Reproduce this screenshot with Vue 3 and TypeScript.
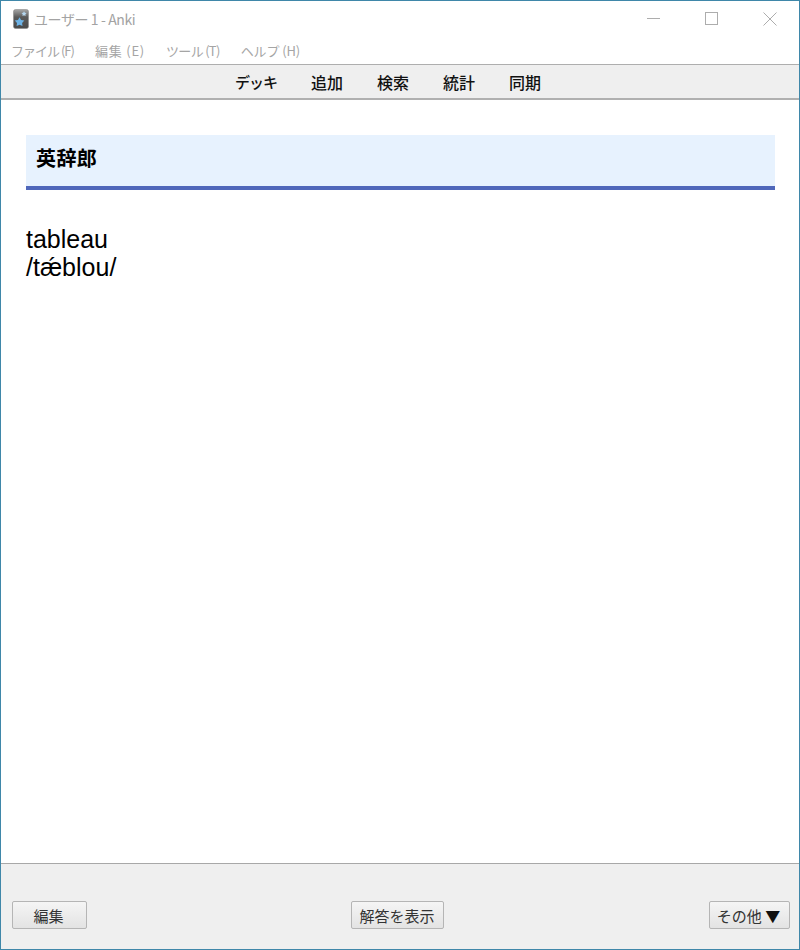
<template>
  <div class="window">
    <header class="titlebar">
      <svg class="app-icon" width="16" height="20" viewBox="0 0 16 20">
        <defs>
          <linearGradient id="icon-bg" x1="0" y1="0" x2="0" y2="1">
            <stop offset="0" stop-color="#a6a6a6" />
            <stop offset="0.4" stop-color="#5a5a5a" />
            <stop offset="1" stop-color="#4a4a4a" />
          </linearGradient>
        </defs>
        <rect x="0.5" y="0.5" width="15" height="19" rx="2" fill="url(#icon-bg)" stroke="#8c8c8c" stroke-width="0.6" />
        <path d="M11 2.2l.9 1.5 1.7.3-1.2 1.2.2 1.7-1.6-.7-1.5.8.2-1.7-1.2-1.2 1.7-.3z" fill="#b5d6ee" />
        <path d="M6.5 8.2l1.6 2.9 3.2.5-2.2 2.3.4 3.2-3-1.4-2.9 1.4.4-3.2-2.2-2.3 3.2-.5z" fill="#6db3e6" />
      </svg>
      <span class="title">ユーザー 1 - Anki</span>
      <div class="win-controls">
        <svg width="14" height="14" viewBox="0 0 14 14"><path d="M0 6.5h13" stroke="#adadad" fill="none" /></svg>
        <svg width="14" height="14" viewBox="0 0 14 14"><rect x="0.5" y="0.5" width="12" height="12" stroke="#adadad" fill="none" /></svg>
        <svg width="14" height="14" viewBox="0 0 14 14"><path d="M0.5 0.5l13 13M13.5 0.5l-13 13" stroke="#adadad" fill="none" /></svg>
      </div>
    </header>
    <nav class="menubar">
      <span v-for="m in menus" :key="m.label" :class="m.cls">{{ m.label }}</span>
    </nav>
    <div class="toolbar">
      <a v-for="t in tools" :key="t" :class="{ kana: t === 'デッキ' }">{{ t }}</a>
    </div>
    <main class="content">
      <h1 class="deck-title">英辞郎</h1>
      <p class="word">tableau<br />/tǽblou/</p>
    </main>
    <footer class="bottombar">
      <button class="btn btn--edit">編集</button>
      <button class="btn btn--answer">解答を表示</button>
      <button class="btn btn--more">その他 <span class="arrow">▼</span></button>
    </footer>
  </div>
</template>

<script setup lang="ts">
const menus: { label: string; cls: string }[] = [
  { label: 'ファイル (F)', cls: 'menu-file' },
  { label: '編集 (E)', cls: 'menu-edit' },
  { label: 'ツール (T)', cls: 'menu-tool' },
  { label: 'ヘルプ (H)', cls: 'menu-help' },
]
const tools: string[] = ['デッキ', '追加', '検索', '統計', '同期']
</script>

<style>
html,
body {
  margin: 0;
  background: #fff;
}
</style>

<style scoped>
.window {
  box-sizing: border-box;
  width: 800px;
  height: 950px;
  display: flex;
  flex-direction: column;
  border: 1px solid #3f87a9;
  background: #fff;
  font-family: "Noto Sans CJK JP", "Liberation Sans", sans-serif;
  overflow: hidden;
}

.titlebar {
  height: 35px;
  flex-shrink: 0;
  display: flex;
  align-items: center;
  padding-left: 12px;
}

.app-icon {
  flex-shrink: 0;
}

.title {
  margin-left: 5px;
  font-size: 14px;
  letter-spacing: -0.4px;
  color: #a3a3a3;
}

.win-controls {
  margin-left: auto;
  display: flex;
  align-items: center;
  gap: 44px;
  padding-right: 22px;
}

.menubar {
  height: 28px;
  flex-shrink: 0;
  display: flex;
  align-items: center;
  gap: 21px;
  padding-left: 10px;
  font-size: 13px;
  color: #a5a5a5;
}

.menu-file {
  letter-spacing: -1px;
}

.menu-edit {
  letter-spacing: 0.8px;
}

.menu-tool {
  letter-spacing: -0.7px;
}

.menu-help {
  letter-spacing: -0.1px;
}

.toolbar {
  box-sizing: border-box;
  height: 36px;
  flex-shrink: 0;
  display: flex;
  justify-content: center;
  align-items: center;
  gap: 34px;
  padding-right: 24px;
  background: #efefef;
  border-top: 1px solid #aeaeae;
  border-bottom: 2px solid #b0b0b0;
  font-size: 16px;
  font-weight: 500;
  color: #111;
}

.kana {
  font-size: 15px;
  letter-spacing: -1px;
}

.content {
  flex: 1;
  min-height: 0;
  padding: 35px 24px 0 25px;
}

.deck-title {
  box-sizing: border-box;
  margin: 0;
  height: 55px;
  padding: 9px 10px 0;
  background: #e7f2fe;
  border-bottom: 4px solid #4f67ba;
  font-size: 20px;
  letter-spacing: 0.4px;
  line-height: 28px;
  font-weight: 700;
  color: #000;
}

.word {
  margin: 35px 0 0;
  font-family: "Liberation Sans", sans-serif;
  font-size: 25px;
  line-height: 28px;
  color: #000;
}

.bottombar {
  box-sizing: border-box;
  height: 86px;
  flex-shrink: 0;
  display: flex;
  justify-content: space-between;
  align-items: flex-start;
  padding: 37px 9px 0 11px;
  background: #efefef;
  border-top: 1px solid #a8a8a8;
}

.btn {
  box-sizing: border-box;
  height: 28px;
  padding: 0;
  border: 1px solid #b5b5b5;
  border-radius: 2px;
  background: linear-gradient(#f5f5f5, #e3e3e3);
  font-family: "Noto Sans CJK JP", "Liberation Sans", sans-serif;
  font-size: 15px;
  color: #333;
}

.btn--edit {
  width: 75px;
  padding-right: 2px;
}

.btn--answer {
  width: 93px;
  margin-right: 2px;
}

.btn--more {
  width: 81px;
  padding-right: 2px;
}

.arrow {
  color: #111;
}
</style>
